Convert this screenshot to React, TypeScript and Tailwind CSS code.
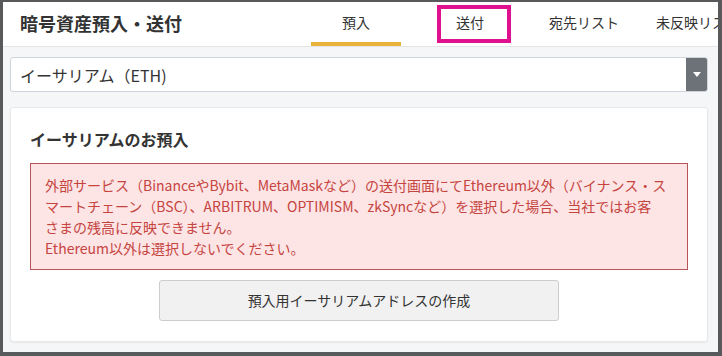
import React from "react";

const font = { fontFamily: '"Noto Sans CJK JP", "Noto Sans", sans-serif' };

export default function App() {
  const tabs = ["預入", "送付", "宛先リスト", "未反映リスト"];
  return (
    <div
      className="w-[722px] h-[356px] bg-[#58595b] pt-[2px] pl-[3px] pr-[4px] pb-[4px] overflow-hidden"
      style={font}
    >
      <div className="w-full h-full bg-[#f5f6f8] flex flex-col overflow-hidden">
        {/* Header */}
        <div className="h-[45px] shrink-0 bg-white border-b border-[#e4e5e7] flex overflow-hidden">
          <div className="w-[296px] shrink-0 pl-[17px] flex items-center pb-[2px]">
            <span className="text-[18px] font-bold text-[#333] leading-none">暗号資産預入・送付</span>
          </div>
          {tabs.map((t, i) => (
            <div key={t} className="relative w-[114px] shrink-0 flex flex-col">
              <div className="flex-1 flex items-center justify-center text-[14px] text-[#333] pt-[1px]">
                <span className="whitespace-nowrap">{t}</span>
              </div>
              <div className={`h-[4px] mx-[12px] ${i === 0 ? "bg-[#e9b23a]" : "bg-transparent"}`} />
              {i === 1 && (
                <div className="absolute left-[24px] top-[3px] w-[74px] h-[38px] border-[4px] border-[#e0118f]" />
              )}
            </div>
          ))}
        </div>

        {/* Select */}
        <div className="ml-[7px] mr-[10px] mt-[10px] h-[35px] shrink-0 flex bg-white border border-[#ced4da] rounded-[3px] overflow-hidden">
          <div className="flex-1 flex items-center pl-[9px] text-[16px] text-[#333]">イーサリアム（ETH)</div>
          <div className="w-[21px] bg-[#6c7278] flex items-center justify-center">
            <svg width="8" height="5" viewBox="0 0 8 5">
              <path d="M0 0 L8 0 L4 5 Z" fill="#fff" />
            </svg>
          </div>
        </div>

        {/* Card */}
        <div className="ml-[7px] mr-[10px] mt-[15px] bg-white border border-[#e8e9eb] rounded-[3px] shadow-[0_1px_2px_rgba(0,0,0,0.06)] pt-[20px] pb-[20px] px-[19px]">
          <div className="text-[16px] font-bold text-[#333] leading-[22px]">イーサリアムのお預入</div>
          <div className="mt-[13px] bg-[#fde4e5] border border-[#b9555a] px-[14px] pt-[11px] pb-[10px] text-[14px] leading-[21px] text-[#c5443f]">
            外部サービス（BinanceやBybit、MetaMaskなど）の送付画面にてEthereum以外（バイナンス・ス
            <br />
            マートチェーン（BSC）、ARBITRUM、OPTIMISM、zkSyncなど）を選択した場合、当社ではお客
            <br />
            さまの残高に反映できません。
            <br />
            Ethereum以外は選択しないでください。
          </div>
          <div className="flex justify-center mt-[10px]">
            <button className="w-[400px] h-[41px] bg-[#f1f1f1] border border-[#cdcdcd] rounded-[3px] text-[14px] text-[#333]">
              預入用イーサリアムアドレスの作成
            </button>
          </div>
        </div>
      </div>
    </div>
  );
}
